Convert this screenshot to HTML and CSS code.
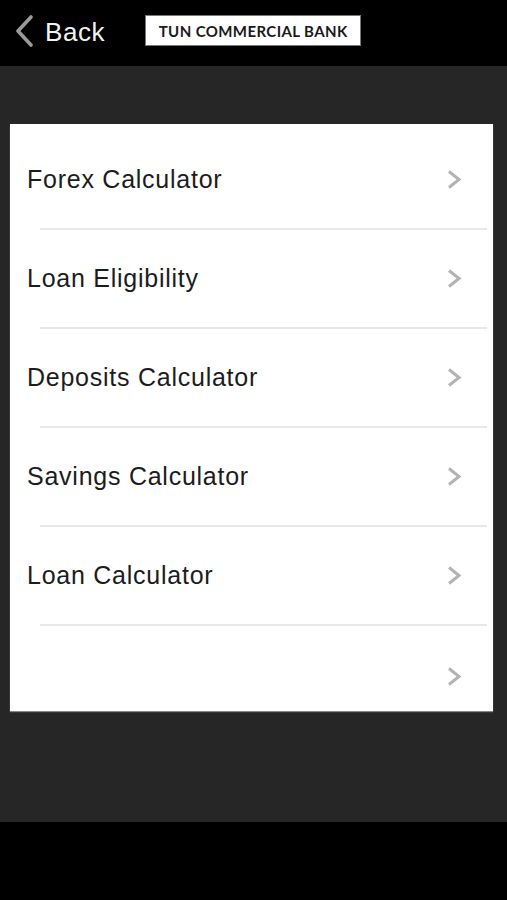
FILE: index.html
```html
<!DOCTYPE html>
<html>
<head>
<meta charset="utf-8">
<link rel="stylesheet" href="styles.css">
</head>
<body>
<div class="screen">
  <header class="topbar">
    <div class="back">
      <svg class="back-icon" width="22" height="32" viewBox="0 0 22 32"><path d="M18 2 L5 16 L18 30" fill="none" stroke="#9a9a9a" stroke-width="3.6" stroke-linecap="round" stroke-linejoin="round"/></svg>
      <span class="back-label">Back</span>
    </div>
    <div class="logo">TUN COMMERCIAL BANK</div>
  </header>
  <main class="content">
    <div class="card">
      <div class="row"><span class="label">Forex Calculator</span><svg class="chev" width="16" height="21" viewBox="0 0 16 21"><path d="M3 2.5 L13 10.5 L3 18.5" fill="none" stroke="#b3b3b3" stroke-width="3"/></svg></div>
      <div class="divider"></div>
      <div class="row"><span class="label">Loan Eligibility</span><svg class="chev" width="16" height="21" viewBox="0 0 16 21"><path d="M3 2.5 L13 10.5 L3 18.5" fill="none" stroke="#b3b3b3" stroke-width="3"/></svg></div>
      <div class="divider"></div>
      <div class="row"><span class="label">Deposits Calculator</span><svg class="chev" width="16" height="21" viewBox="0 0 16 21"><path d="M3 2.5 L13 10.5 L3 18.5" fill="none" stroke="#b3b3b3" stroke-width="3"/></svg></div>
      <div class="divider"></div>
      <div class="row"><span class="label">Savings Calculator</span><svg class="chev" width="16" height="21" viewBox="0 0 16 21"><path d="M3 2.5 L13 10.5 L3 18.5" fill="none" stroke="#b3b3b3" stroke-width="3"/></svg></div>
      <div class="divider"></div>
      <div class="row"><span class="label">Loan Calculator</span><svg class="chev" width="16" height="21" viewBox="0 0 16 21"><path d="M3 2.5 L13 10.5 L3 18.5" fill="none" stroke="#b3b3b3" stroke-width="3"/></svg></div>
      <div class="divider"></div>
      <div class="row row-last"><span class="label"></span><svg class="chev" width="16" height="21" viewBox="0 0 16 21"><path d="M3 2.5 L13 10.5 L3 18.5" fill="none" stroke="#b3b3b3" stroke-width="3"/></svg></div>
    </div>
  </main>
  <footer class="bottombar"></footer>
</div>
</body>
</html>
```

FILE: styles.css
```css
* { box-sizing: border-box; }
html, body { margin: 0; padding: 0; }
body {
  background: #262626;
  font-family: "Liberation Sans", Arial, sans-serif;
}
.screen {
  width: 507px;
  height: 900px;
  display: flex;
  flex-direction: column;
  overflow: hidden;
}
.topbar {
  height: 66px;
  flex: none;
  background: #000;
  display: flex;
  align-items: flex-start;
  padding: 14px 0 0 13px;
}
.back {
  display: flex;
  align-items: center;
  gap: 10px;
  height: 33px;
}
.back-icon { display: block; }
.back-label {
  color: #f2f2f2;
  font-size: 26px;
  letter-spacing: 0.6px;
  line-height: 1;
  margin-top: 2px;
}
.logo {
  margin-left: 40px;
  margin-top: 1px;
  width: 216px;
  height: 31px;
  background: #fff;
  border: 1px solid #777;
  color: #1a1a1a;
  font-family: Lato, "Open Sans", sans-serif;
  font-weight: 700;
  font-size: 15px;
  letter-spacing: 0.4px;
  display: flex;
  align-items: center;
  justify-content: center;
}
.content {
  flex: 1;
  background: #262626;
  padding: 58px 14px 0 10px;
}
.card {
  background: #fff;
  height: 587px;
  overflow: hidden;
  padding-top: 7px;
  box-shadow: 0 1px 1px rgba(200,200,200,0.6);
}
.row {
  height: 97px;
  display: flex;
  align-items: center;
  justify-content: space-between;
  padding: 0 31px 0 17px;
}
.row-last { height: 100px; }
.label {
  font-size: 25px;
  letter-spacing: 0.75px;
  color: #1c1c1c;
}
.chev { display: block; }
.divider {
  height: 2px;
  background: #e8e8e8;
  margin: 0 6px 0 30px;
}
.bottombar {
  height: 78px;
  flex: none;
  background: #000;
}
```
